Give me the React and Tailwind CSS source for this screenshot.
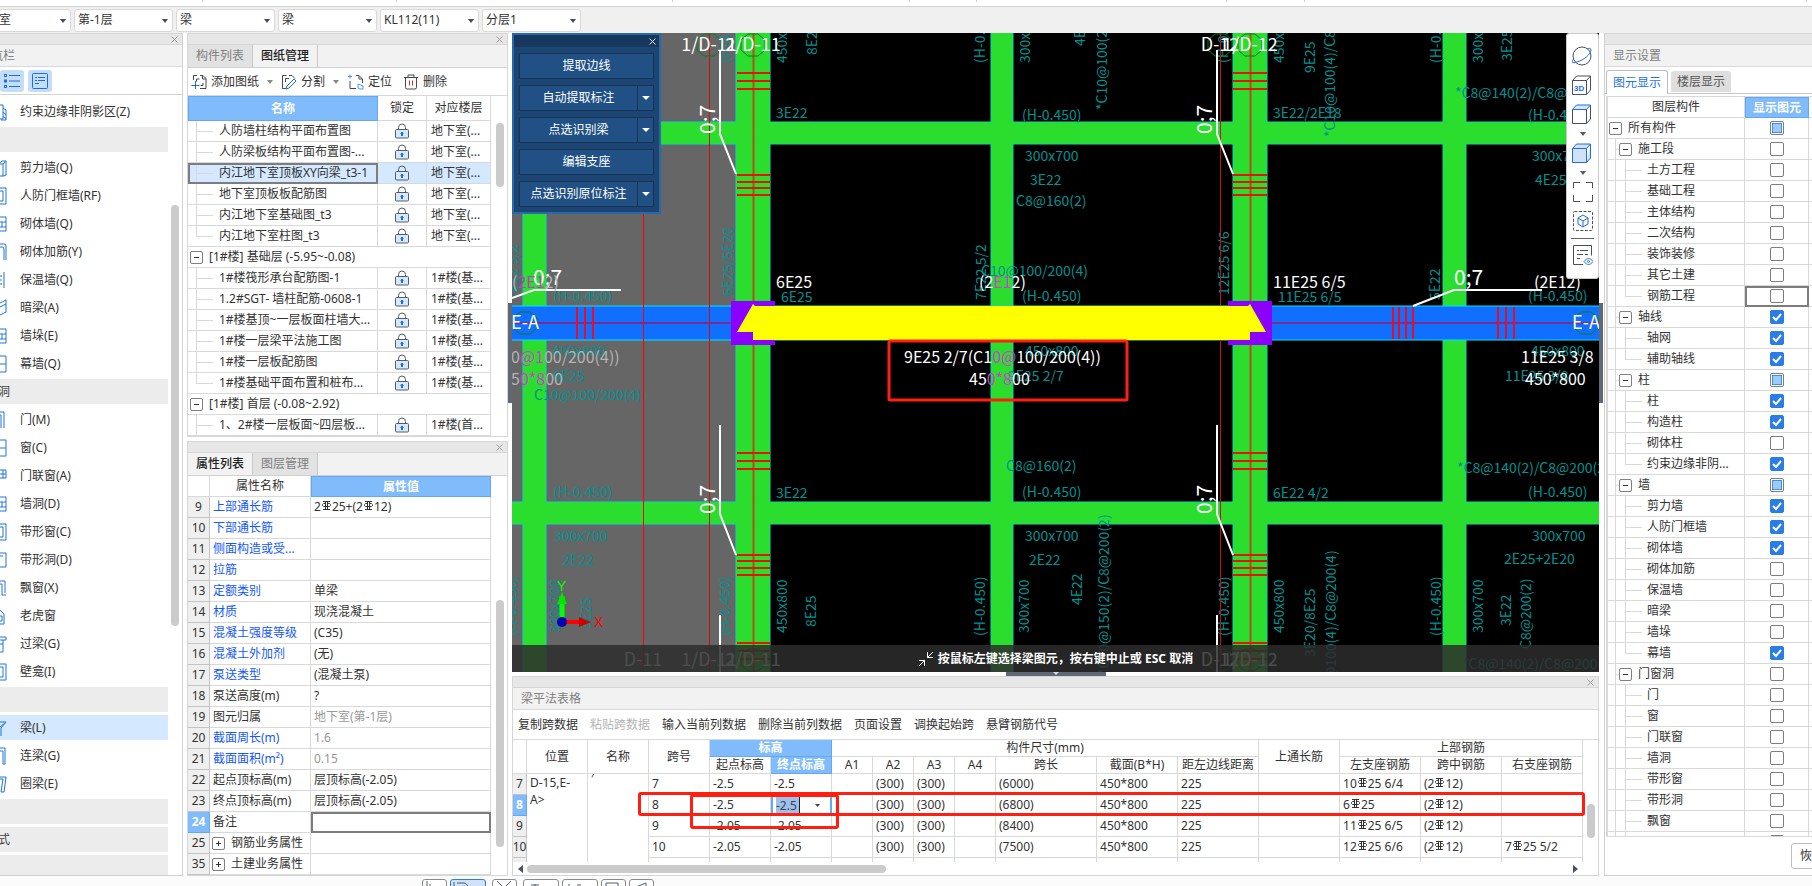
import React, { useState } from 'react';

const LEVEL_SELECTS = [
  { label: '楼栋', value: '地下室' },
  { label: '楼层', value: '第-1层' },
  { label: '构件大类', value: '梁' },
  { label: '构件类型', value: '梁' },
  { label: '构件', value: 'KL112(11)' },
  { label: '分层', value: '分层1' },
];

const RIBBON_GROUPS = ['w-[203px]', 'w-[194px]', 'w-[276px]', 'w-[237px]', 'w-[67px]', 'w-[250px]', 'w-[78px]', 'w-[502px]'];

const NAV_ITEMS = [
  { text: '约束边缘非阴影区(Z)', icon: 'hatch' },
  { text: '', group: true },
  { text: '剪力墙(Q)', icon: 'wall' },
  { text: '人防门框墙(RF)', icon: 'frame' },
  { text: '砌体墙(Q)', icon: 'brick' },
  { text: '砌体加筋(Y)', icon: 'hook' },
  { text: '保温墙(Q)', icon: 'dots' },
  { text: '暗梁(A)', icon: 'beam' },
  { text: '墙垛(E)', icon: 'brick' },
  { text: '幕墙(Q)', icon: 'pane' },
  { text: '洞', group: true },
  { text: '门(M)', icon: 'door' },
  { text: '窗(C)', icon: 'pane' },
  { text: '门联窗(A)', icon: 'grid' },
  { text: '墙洞(D)', icon: 'brick' },
  { text: '带形窗(C)', icon: 'frame' },
  { text: '带形洞(D)', icon: 'opening' },
  { text: '飘窗(X)', icon: 'bay' },
  { text: '老虎窗', icon: 'house' },
  { text: '过梁(G)', icon: 'lintel' },
  { text: '壁龛(I)', icon: 'frame' },
  { text: '', group: true },
  { text: '梁(L)', icon: 'fork', active: true },
  { text: '连梁(G)', icon: 'hook2' },
  { text: '圈梁(E)', icon: 'ring' },
  { text: '', group: true },
  { text: '式', group: true },
  { text: '', group: true },
];

const DRAWINGS = [
  { name: '人防墙柱结构平面布置图', floor: '地下室(...' },
  { name: '人防梁板结构平面布置图-...', floor: '地下室(...' },
  { name: '内江地下室顶板XY向梁_t3-1', floor: '地下室(...', active: true },
  { name: '地下室顶板板配筋图', floor: '地下室(...' },
  { name: '内江地下室基础图_t3', floor: '地下室(...' },
  { name: '内江地下室柱图_t3', floor: '地下室(...', last: true },
  { group: '[1#楼] 基础层 (-5.95~-0.08)' },
  { name: '1#楼筏形承台配筋图-1', floor: '1#楼(基...' },
  { name: '1.2#SGT- 墙柱配筋-0608-1', floor: '1#楼(基...' },
  { name: '1#楼基顶~一层板面柱墙大...', floor: '1#楼(基...' },
  { name: '1#楼一层梁平法施工图', floor: '1#楼(基...' },
  { name: '1#楼一层板配筋图', floor: '1#楼(基...' },
  { name: '1#楼基础平面布置和桩布...', floor: '1#楼(基...', last: true },
  { group: '[1#楼] 首层 (-0.08~2.92)' },
  { name: '1、2#楼一层板面~四层板...', floor: '1#楼(首...' },
];

const PROPERTIES = [
  { no: 9, name: '上部通长筋', value: '2Φ25+(2Φ12)', blue: true },
  { no: 10, name: '下部通长筋', value: '', blue: true },
  { no: 11, name: '侧面构造或受...', value: '', blue: true },
  { no: 12, name: '拉筋', value: '', blue: true },
  { no: 13, name: '定额类别', value: '单梁', blue: true },
  { no: 14, name: '材质', value: '现浇混凝土', blue: true },
  { no: 15, name: '混凝土强度等级', value: '(C35)', blue: true },
  { no: 16, name: '混凝土外加剂', value: '(无)', blue: true },
  { no: 17, name: '泵送类型', value: '(混凝土泵)', blue: true },
  { no: 18, name: '泵送高度(m)', value: '?' },
  { no: 19, name: '图元归属', value: '地下室(第-1层)', readonly: true },
  { no: 20, name: '截面周长(m)', value: '1.6', blue: true, readonly: true },
  { no: 21, name: '截面面积(m²)', value: '0.15', blue: true, readonly: true },
  { no: 22, name: '起点顶标高(m)', value: '层顶标高(-2.05)' },
  { no: 23, name: '终点顶标高(m)', value: '层顶标高(-2.05)' },
  { no: 24, name: '备注', value: '', active: true },
  { no: 25, name: '钢筋业务属性', value: '', expand: true },
  { no: 35, name: '土建业务属性', value: '', expand: true },
];

const SPANS = [
  { no: 7, start: '-2.5', end: '-2.5', len: '(6000)', left: '10Φ25 6/4', mid: '(2Φ12)', right: '' },
  { no: 8, start: '-2.5', end: '-2.5', len: '(6800)', left: '6Φ25', mid: '(2Φ12)', right: '', active: true },
  { no: 9, start: '-2.05', end: '-2.05', len: '(8400)', left: '11Φ25 6/5', mid: '(2Φ12)', right: '' },
  { no: 10, start: '-2.05', end: '-2.05', len: '(7500)', left: '12Φ25 6/6', mid: '(2Φ12)', right: '7Φ25 5/2' },
  { no: 11, start: '-2.05', end: '-2.05', len: '(7500)', left: '7Φ25 5/2', mid: '(2Φ12)', right: '7Φ25 5/2' },
];

const LAYERS = [
  { name: '所有构件', level: 0, state: 'some' },
  { name: '施工段', level: 1 },
  { name: '土方工程', level: 2 },
  { name: '基础工程', level: 2 },
  { name: '主体结构', level: 2 },
  { name: '二次结构', level: 2 },
  { name: '装饰装修', level: 2 },
  { name: '其它土建', level: 2 },
  { name: '钢筋工程', level: 2, last: true, active: true },
  { name: '轴线', level: 1, state: 'on' },
  { name: '轴网', level: 2, state: 'on' },
  { name: '辅助轴线', level: 2, state: 'on', last: true },
  { name: '柱', level: 1, state: 'some' },
  { name: '柱', level: 2, state: 'on' },
  { name: '构造柱', level: 2, state: 'on' },
  { name: '砌体柱', level: 2 },
  { name: '约束边缘非阴...', level: 2, state: 'on', last: true },
  { name: '墙', level: 1, state: 'some' },
  { name: '剪力墙', level: 2, state: 'on' },
  { name: '人防门框墙', level: 2, state: 'on' },
  { name: '砌体墙', level: 2, state: 'on' },
  { name: '砌体加筋', level: 2 },
  { name: '保温墙', level: 2 },
  { name: '暗梁', level: 2 },
  { name: '墙垛', level: 2 },
  { name: '幕墙', level: 2, state: 'on', last: true },
  { name: '门窗洞', level: 1 },
  { name: '门', level: 2 },
  { name: '窗', level: 2 },
  { name: '门联窗', level: 2 },
  { name: '墙洞', level: 2 },
  { name: '带形窗', level: 2 },
  { name: '带形洞', level: 2 },
  { name: '飘窗', level: 2 },
  { name: '', level: 2 },
];

const NAV_ICON_PATHS = {
  hatch: 'M0 2h3v14H0M3 5l3 2v10H1M3 9l3 3M3 13l3 3',
  wall: 'M0 4l2-2h4v14l-2 1H0M2 2v0M0 5h3v12M3 5l3-3',
  frame: 'M0 1h6v16H0M0 4h3v10H0',
  brick: 'M0 2h6v14H0M0 7h6M0 12h6M2 7v5',
  hook: 'M0 4h2a2 2 0 012 2v11M0 1h4a2 2 0 012 2v14',
  dots: 'M4 1v16M0 5h2M0 9h2M0 13h2',
  beam: 'M0 4l6-3v12l-6 3M0 8l6-3',
  pane: 'M0 1h6v16H0M0 9h6',
  door: 'M0 1h4v16M0 4h1v13',
  grid: 'M0 3h6v8H0M0 7h6M3 3v8',
  opening: 'M0 2h6v14H0M0 5h3',
  bay: 'M0 2h5v12M0 5h2v11h4',
  house: 'M0 3l4 4v10H0M0 9h2v5H0',
  lintel: 'M0 2h6v3H0M3 5v12H0M0 9h3',
  fork: 'M0 3h6l-5 6v8M0 8l5-4',
  hook2: 'M0 1h5v16H3V4H0',
  ring: 'M0 2h6l-2 15H1L3 4H0',
};

function NavIcon({ name }) {
  return (
    <svg width="7" height="18" viewBox="0 0 7 18" fill="none" stroke="#1f74d8" className="shrink-0">
      <path d={NAV_ICON_PATHS[name]} />
    </svg>
  );
}

// HRB400 bar mark, written between the bar count and the diameter
function BarMark() {
  return (
    <svg width="9" height="9" viewBox="0 0 9 9" fill="none" stroke="#333" className="mx-px inline-block align-[1px]" aria-label="三级钢">
      <path d="M1 .5h7M1 8.500h7M3.500 1v7M5.500 1v7" />
      <path d="M3.500 2.500h-2l-1 1v1l1 1h6l1-1v-1l-1-1h-2" />
    </svg>
  );
}

function BarText({ text }) {
  const parts = text.split('Φ');
  return parts.map((part, i) => (
    <React.Fragment key={i}>
      {i > 0 && <BarMark />}
      {part}
    </React.Fragment>
  ));
}

function Caret({ className = '' }) {
  return (
    <svg width="6" height="4" viewBox="0 0 6 4" className={className}>
      <path d="M0 0h6L3 4z" fill="currentColor" />
    </svg>
  );
}

function PanelStrip({ name }) {
  return (
    <div className="flex h-3 shrink-0 items-center justify-end border-y border-[#d6d6d6] bg-[#e7e7e7] pr-1">
      {name && (
        <button aria-label={name}>
          <svg width="7" height="7" viewBox="0 0 7 7" stroke="#9b9b9b" fill="none">
            <path d="M.5 .5l6 6M6.500 .5l-6 6" />
          </svg>
        </button>
      )}
    </div>
  );
}

function ToggleBox({ sign, label }) {
  return (
    <button aria-label={label} className="flex size-[13px] shrink-0 items-center justify-center rounded-[2px] border border-[#808080] bg-white">
      <svg width="7" height="7" viewBox="0 0 7 7" stroke="#333">
        <path d={sign === '+' ? 'M1 3.500h5M3.500 1v5' : 'M1 3.500h5'} />
      </svg>
    </button>
  );
}

function LockIcon() {
  return (
    <svg width="16" height="16" viewBox="0 0 16 16" fill="none" stroke="#555c66" className="mx-auto">
      <path d="M4.500 6V4.500a3.500 3.500 0 017 0V6" />
      <rect x="1.500" y="6.500" width="13" height="8.500" rx="1" fill="#d6e8fd" />
      <path d="M8 9v4" stroke="#1b6fe0" strokeWidth="2" />
      <path d="M6.500 10.500h3" stroke="#1b6fe0" />
    </svg>
  );
}

function TopBar() {
  return (
    <header className="shrink-0">
      <div className="flex h-[7px] items-start border-b border-[#d2d2d2] bg-white">
        {RIBBON_GROUPS.map((width) => (
          <div key={width} className={`h-0.5 shrink-0 border-r border-[#d6d6d6] ${width}`} />
        ))}
      </div>
      <div className="-ml-7 flex h-[26px] items-center gap-[3px] bg-[#f0f0f0]">
        {LEVEL_SELECTS.map((item) => (
          <div key={item.label} className="relative w-[99px]">
            <select
              aria-label={item.label}
              className={`block h-[23px] w-full appearance-none rounded-[3px] border border-[#d9d9d9] bg-white text-[#333] ${
                item.label === '楼栋' ? 'pl-[2px]' : 'pl-[3px]'
              }`}
            >
              <option>{item.value}</option>
            </select>
            <Caret className="pointer-events-none absolute right-[5px] top-[10px] text-[#444a66]" />
          </div>
        ))}
      </div>
    </header>
  );
}

function NavPanel() {
  return (
    <aside className="relative flex w-[183px] shrink-0 flex-col overflow-hidden border-b border-r border-[#d2d2d2] bg-white">
      <PanelStrip name="关闭导航栏" />
      <div className="flex h-[22px] shrink-0 items-center border-b border-[#d9d9d9] bg-[#f2f2f2] text-[#808080]">
        <span className="-ml-[21px]">导航栏</span>
      </div>
      <div className="flex h-7 shrink-0 items-center gap-1 border-b border-[#d2d2d2]">
        <button aria-label="列表" className="flex h-[22px] w-6 items-center justify-center rounded-[3px] bg-[#c4ddf8]">
          <svg width="16" height="14" viewBox="0 0 16 14" fill="none" stroke="#1b6fe0">
            <path d="M5 1.500h11M5 7h11M5 12.500h11" />
            <rect x=".5" y=".5" width="2" height="2" />
            <rect x=".5" y="6" width="2" height="2" />
            <rect x=".5" y="11.500" width="2" height="2" />
          </svg>
        </button>
        <button aria-label="分类" className="flex h-[22px] w-6 items-center justify-center rounded-[3px] bg-[#c4ddf8]">
          <svg width="16" height="16" viewBox="0 0 16 16" fill="none" stroke="#1b6fe0">
            <rect x=".5" y=".5" width="15" height="15" rx="1" />
            <path d="M3 4.500h2M6 4.500h7M3 7.500h2M6 7.500h7M3 10.500h4" />
          </svg>
        </button>
      </div>
      <nav className="flex w-[168px] flex-col gap-[3px] pt-1">
        {NAV_ITEMS.map((item, i) =>
          item.group ? (
            <div key={i} className="flex h-[25px] shrink-0 items-center bg-[#ececec] text-[#444]">
              <span className="-ml-0.5">{item.text}</span>
            </div>
          ) : (
            <a
              key={i}
              href="#"
              className={`flex h-[25px] shrink-0 items-center gap-[13px] text-[#333] ${item.active ? 'bg-[#d4e8ff]' : ''}`}
            >
              <NavIcon name={item.icon} />
              {item.text}
            </a>
          )
        )}
      </nav>
      <div className="absolute right-[3px] top-[172px] h-[421px] w-2 rounded bg-[#cbcbcb]" />
    </aside>
  );
}

function DrawingPanel() {
  return (
    <section className="relative h-[404px] shrink-0 overflow-hidden border-x border-b border-[#d6d6d6] bg-white">
      <PanelStrip name="关闭图纸管理" />
      <div className="flex h-[23px] border-b border-[#d0d0d0] bg-[#f2f2f2]">
        <button className="w-[65px] border-r border-[#c8c8c8] bg-[#e2e2e2] text-[#808080]">构件列表</button>
        <button className="w-[65px] border-r border-[#c8c8c8] font-medium text-[#222]">图纸管理</button>
      </div>
      <div className="flex h-7 items-center border-b border-[#d9d9d9] pl-[3px] text-[#333]">
        <button className="flex items-center gap-1">
          <svg width="16" height="16" viewBox="0 0 16 16" fill="none" stroke="#444a55">
            <path d="M2.500 6V1.500H6M9 1.500h3l3 3V14.500H9M11.500 2v3H15M5.500 7.500V5h3M12 9v2.500H9.500" />
            <path d="M4.500 7v8M.5 11.500h8" stroke="#1b6fe0" />
          </svg>
          添加图纸
        </button>
        <Caret className="ml-2 text-[#888]" />
        <button className="ml-2 flex items-center gap-1">
          <svg width="16" height="16" viewBox="0 0 16 16" fill="none" stroke="#444a55">
            <path d="M5 14.500H1.500V1.500h4M8 1.500h3l3 3M4.500 8V4.500H8" />
            <path d="M6 12l7-7 2 2-7 7-3 1z" stroke="#1b6fe0" />
          </svg>
          分割
        </button>
        <Caret className="ml-2 text-[#888]" />
        <button className="ml-[9px] flex items-center gap-1">
          <svg width="16" height="16" viewBox="0 0 16 16" fill="none" stroke="#444a55">
            <path d="M8 1.500h3l3.500 3.500V9M2 7v7.500h6M11 2v3h3" />
            <path d="M0 2.500h4M2 .5v4M10 10v4l2 1h3v-3z" stroke="#4b97ee" />
          </svg>
          定位
        </button>
        <button className="ml-3 flex items-center gap-[5px]">
          <svg width="14" height="16" viewBox="0 0 14 16" fill="none" stroke="#444a55">
            <path d="M0 3.500h14M4 3V1h6v2M1.500 4v9.500a1.500 1.500 0 001.500 1.500h8a1.500 1.500 0 001.500-1.500V4" />
            <path d="M5.500 6.500v5M8.500 6.500v5" stroke="#e02a2a" />
          </svg>
          删除
        </button>
      </div>
      <table className="w-[303px] table-fixed border-separate border-spacing-0 text-[#333]">
        <colgroup>
          <col />
          <col className="w-[49px]" />
          <col className="w-16" />
        </colgroup>
        <thead>
          <tr className="h-[25px]">
            <th className="border border-[#62a8f2] bg-[#80bbfb] font-bold text-white">名称</th>
            <th className="border-b border-r border-[#d9d9d9] font-normal">锁定</th>
            <th className="border-b border-r border-[#d9d9d9] font-normal">对应楼层</th>
          </tr>
        </thead>
        <tbody>
          {DRAWINGS.map((row) =>
            row.group ? (
              <tr key={row.group} className="h-[21px]">
                <td colSpan={3} className="border-b border-r border-[#d9d9d9] p-0">
                  <div className="flex h-5 items-center gap-[6px] pl-0.5">
                    <ToggleBox sign="-" label={`折叠 ${row.group}`} />
                    {row.group}
                  </div>
                </td>
              </tr>
            ) : (
              <tr key={row.name} className={`h-[21px] ${row.active ? 'bg-[#d4e8ff]' : ''}`}>
                <td
                  className={`border-b border-r border-[#d9d9d9] p-0 ${
                    row.active ? 'outline-2 -outline-offset-2 outline-[#7d7d7d]' : ''
                  }`}
                >
                  <div className="flex h-5 items-center pl-2">
                    <span className={`w-4 self-start border-l border-[#d9d9d9] ${row.last ? 'h-[11px]' : 'h-5'}`}>
                      <span className="mt-[10px] block h-px w-4 bg-[#d9d9d9]" />
                    </span>
                    <span className="ml-[7px] overflow-hidden whitespace-nowrap">{row.name}</span>
                  </div>
                </td>
                <td className="border-b border-r border-[#d9d9d9] p-0">
                  <LockIcon />
                </td>
                <td className="whitespace-nowrap border-b border-r border-[#d9d9d9] py-0 pl-1 pr-0">{row.floor}</td>
              </tr>
            )
          )}
        </tbody>
      </table>
      <div className="absolute right-[3px] top-[90px] h-16 w-2 rounded bg-[#cbcbcb]" />
    </section>
  );
}

function PropertyPanel() {
  return (
    <section className="relative min-h-0 flex-1 overflow-hidden border-x border-b border-[#d6d6d6] bg-white">
      <PanelStrip name="关闭属性列表" />
      <div className="flex h-[23px] border-b border-[#d0d0d0] bg-[#f2f2f2]">
        <button className="w-[65px] border-r border-[#c8c8c8] font-medium text-[#222]">属性列表</button>
        <button className="w-[65px] border-r border-[#c8c8c8] bg-[#e2e2e2] text-[#808080]">图层管理</button>
      </div>
      <table className="w-[303px] table-fixed border-separate border-spacing-0 text-[#333]">
        <colgroup>
          <col className="w-[22px]" />
          <col className="w-[101px]" />
          <col />
        </colgroup>
        <thead>
          <tr className="h-[21px]">
            <th className="border-b border-r border-[#d9d9d9] p-0" aria-label="序号" />
            <th className="border-b border-r border-[#d9d9d9] p-0 font-normal">属性名称</th>
            <th className="border border-[#62a8f2] bg-[#80bbfb] p-0 font-bold text-white">属性值</th>
          </tr>
        </thead>
        <tbody>
          {PROPERTIES.map((row) => (
            <tr key={row.no} className="h-[21px]">
              <td
                className={`border-b border-r p-0 text-center ${
                  row.active ? 'border-[#62a8f2] bg-[#80bbfb] font-bold text-white' : 'border-[#c4c4c4] bg-[#efefef]'
                }`}
              >
                {row.no}
              </td>
              <td className={`whitespace-nowrap border-b border-r border-[#d9d9d9] p-0 pl-[3px] ${row.blue ? 'text-[#1457ff]' : ''}`}>
                {row.expand ? (
                  <div className="-ml-px flex h-5 items-center gap-[6px]">
                    <ToggleBox sign="+" label={`展开 ${row.name}`} />
                    {row.name}
                  </div>
                ) : (
                  row.name
                )}
              </td>
              <td
                className={`border-b border-r border-[#d9d9d9] p-0 pl-[3px] ${row.readonly ? 'text-[#999]' : ''} ${
                  row.active ? 'outline-2 -outline-offset-2 outline-[#7d7d7d]' : ''
                }`}
              >
                <BarText text={row.value} />
              </td>
            </tr>
          ))}
        </tbody>
      </table>
      <div className="absolute right-[3px] top-[159px] h-[247px] w-2 rounded bg-[#cbcbcb]" />
    </section>
  );
}

const V_BEAMS = [
  { x: 523, w: 23 },
  { x: 736, w: 34 },
  { x: 991, w: 22 },
  { x: 1233, w: 34 },
  { x: 1443, w: 23 },
];
const H_BEAMS = [
  { y: 122, h: 22 },
  { y: 502, h: 22 },
];
const STIRRUP_Y = [73, 81, 89, 175, 182, 188, 195, 453, 461, 469, 555, 561, 568, 575, 643, 651, 659];
const STIRRUP_X = [577, 585, 593, 1393, 1399, 1406, 1413, 1498, 1506, 1514];

// plan notes: [text, x, baseline y]
const NOTES = [
  ['3E22', 776, 118], ['(H-0.450)', 1022, 120], ['300x700', 1025, 161], ['3E22', 1030, 185], ['C8@160(2)', 1016, 206],
  ['(H-0.450)', 553, 301], ['6E25', 781, 302], ['C10@100/200(4)', 981, 276], ['(H-0.450)', 1022, 301],
  ['3E22/2E18', 1273, 118], ['*C8@140(2)/C8@200(2)', 1455, 98], ['(H-0.450)', 1528, 120], ['300x700', 1532, 161],
  ['4E25', 1535, 185], ['11E25 6/5', 1278, 302], ['(H-0.450)', 1528, 301], ['450x800', 1531, 356], ['11E25 3/8', 1505, 381],
  ['450x800', 1025, 356], ['9E25 2/7', 1008, 381], ['450x800', 552, 356], ['6E25', 553, 381], ['C10@100/200(4)', 534, 400],
  ['(H-0.450)', 553, 497], ['300x700', 554, 541], ['2E22', 562, 565], ['3E22', 776, 498], ['C8@160(2)', 1006, 471],
  ['(H-0.450)', 1022, 497], ['300x700', 1025, 541], ['2E22', 1029, 565], ['6E22 4/2', 1273, 498],
  ['*C8@140(2)/C8@200(2)', 1457, 473], ['(H-0.450)', 1528, 497], ['300x700', 1532, 541], ['2E25+2E20', 1504, 564],
  ['*C8@140(2)/C8@200(2)', 1462, 669],
];

// notes that run upwards: [text, right edge x, bottom y]
const V_NOTES = [
  ['(H-0.450)', 730, 63], ['450x800', 787, 63], ['8E25', 817, 55], ['(H-0.450)', 985, 63], ['300x700', 1030, 63],
  ['4E22', 1085, 46], ['*C10@100(2)/C8@200(2)', 1107, 110], ['(H-0.450)', 1228, 63], ['450x800', 1284, 63],
  ['9E25', 1315, 73], ['*C10@100(4)/C8@200(4)', 1335, 137], ['(H-0.450)', 1441, 63], ['300x700', 1483, 63],
  ['3E25', 1512, 61], ['7E22 5/2', 518, 300], ['6E25/5E20', 733, 296], ['7E22 5/2', 986, 300], ['12E25 6/6', 1229, 295],
  ['5E22', 1440, 300], ['(H-0.450)', 517, 636], ['300x700', 560, 633], ['3E25', 591, 629], ['(H-0.450)', 730, 636],
  ['450x800', 787, 633], ['8E25', 816, 627], ['(H-0.450)', 985, 636], ['300x700', 1029, 633], ['4E22', 1082, 605],
  ['*C10@150(2)/C8@200(2)', 1109, 675], ['(H-0.450)', 1229, 636], ['450x800', 1284, 633], ['3E20/8E25', 1315, 657],
  ['*C10@100(4)/C8@200(4)', 1336, 711], ['(H-0.450)', 1441, 636], ['300x700', 1483, 633], ['3E22', 1511, 626],
  ['C8@200(2)', 1531, 649],
];

const AXIS_LABELS = [
  ['1/D-11', 709, 51], ['2/D-11', 753, 51], ['D-12', 1220, 51], ['1/D-12', 1250, 51],
  ['E-A', 525, 329], ['E-A', 1586, 329],
  ['D-11', 643, 666], ['1/D-11', 709, 666], ['2/D-11', 753, 666], ['D-12', 1220, 666], ['1/D-12', 1250, 666],
];

function AxisBubble({ x, y }) {
  return <path d={`M${x - 5} ${y - 11}h10l7 6v10l-7 6h-10l-7-6v-10z`} fill="none" stroke="#0b7a1f" />;
}

function PlanDrawing() {
  return (
    <svg viewBox="512 33 1087 639" preserveAspectRatio="xMinYMin slice" className="block h-full w-full bg-black">
      <rect x="512" y="33" width="224" height="639" fill="#666" />
      {V_BEAMS.map((b) => (
        <rect key={b.x} x={b.x} y="20" width={b.w} height="660" fill="#2bdd2d" stroke="#00dcdc" />
      ))}
      {H_BEAMS.map((b) => (
        <rect key={b.y} x="500" y={b.y} width="1110" height={b.h} fill="#2bdd2d" stroke="#00dcdc" />
      ))}
      {V_BEAMS.map((b) => (
        <rect key={b.x} x={b.x + 0.5} y="20" width={b.w - 1} height="660" fill="#2bdd2d" />
      ))}
      {H_BEAMS.map((b) => (
        <rect key={b.y} x="500" y={b.y + 0.5} width="1110" height={b.h - 1} fill="#2bdd2d" />
      ))}

      <g className="font-['Noto_Sans_CJK_SC',sans-serif] text-[14px]" fill="#009393">
        {NOTES.map(([text, x, y]) => (
          <text key={`${x}-${y}`} x={x} y={y}>
            {text}
          </text>
        ))}
        {V_NOTES.map(([text, x, y]) => (
          <text key={`${x}-${y}`} transform={`translate(${x} ${y}) rotate(-90)`}>
            {text}
          </text>
        ))}
      </g>

      <rect x="500" y="306" width="1110" height="34" fill="#116fff" stroke="#00e5ff" />
      <path d="M500 323h1110" stroke="#7a2d90" strokeWidth="2" />
      <path d="M643.500 33v639" stroke="#f00" />
      <path d="M709.500 33v639M1220.500 33v273M1220.500 340v332" stroke="#c81010" />
      <path d="M753.500 33v639M1250.500 33v639" stroke="#b0521c" strokeWidth="2" />
      {STIRRUP_Y.map((y) => (
        <path key={y} d={`M737 ${y}h33M1233 ${y}h34`} stroke="#e61405" strokeWidth="2" />
      ))}
      {STIRRUP_X.map((x) => (
        <path key={x} d={`M${x} 307v32`} stroke="#f00a1e" strokeWidth="2" />
      ))}
      <path d="M731 301h44v44h-44zM1228 301h44v44h-44z" fill="#8c00ff" />
      <path d="M753 304l2 2h493l2-2 16 28h-16v8H753v-8h-16z" fill="#ff0" />

      {[709, 753, 1220, 1250].map((x) => (
        <React.Fragment key={x}>
          <AxisBubble x={x} y={45} />
          <AxisBubble x={x} y={660} />
        </React.Fragment>
      ))}
      <AxisBubble x={643} y={660} />
      <AxisBubble x={525} y={323} />
      <AxisBubble x={1586} y={323} />

      <g fill="none" stroke="#fff" strokeWidth="2">
        <path d="M720 50v84l16 40M720 425v89l16 41M720 615v60" />
        <path d="M1217 50v84l16 40M1217 425v89l16 41M1217 615v60" />
        <path d="M512 298l22-8h87M1413 306l41-16h88" />
      </g>
      <g className="font-['Noto_Sans_CJK_SC',sans-serif]" fill="#fff">
        <g className="text-[18px]" textAnchor="middle">
          {AXIS_LABELS.map(([text, x, y]) => (
            <text key={`${x}-${y}`} x={x} y={y}>
              {text}
            </text>
          ))}
        </g>
        <g className="text-[21px]">
          <text x="533" y="285">0;7</text>
          <text x="1454" y="285">0;7</text>
          <text transform="translate(715 134) rotate(-90)">0;7</text>
          <text transform="translate(715 514) rotate(-90)">0;7</text>
          <text transform="translate(1212 134) rotate(-90)">0;7</text>
          <text transform="translate(1212 514) rotate(-90)">0;7</text>
        </g>
        <g className="text-[16px]">
          <text x="776" y="288">6E25</text>
          <text x="979" y="288">(2<tspan fill="#d63ad6">E1</tspan>2)</text>
          <text x="1273" y="288">11E25 6/5</text>
          <text x="1534" y="288">(2E12)</text>
          <text x="904" y="363">9E25 2/7(C1<tspan fill="#d63ad6">0@</tspan>100/200(4))</text>
          <text x="969" y="385">45<tspan fill="#d63ad6">0*8</tspan>00</text>
          <text x="1521" y="363">11E25 3/8</text>
          <text x="1525" y="385">450*800</text>
          <g fill="#b4b4b4">
            <text x="512" y="288">(<tspan fill="#b04ab0">2E1</tspan>2)</text>
            <text x="511" y="363">0<tspan fill="#d63ad6">@1</tspan>00/200(4))</text>
            <text x="511" y="385">5<tspan fill="#d63ad6">0*8</tspan>00</text>
          </g>
        </g>
      </g>

      <rect x="889" y="341" width="238" height="59" rx="1" fill="none" stroke="#ff1e0f" strokeWidth="3" />

      <path d="M562 620v-24" stroke="#0f0" strokeWidth="5" />
      <path d="M557 604l5-12 5 12z" fill="#00e600" />
      <path d="M562 622h22" stroke="#f00" strokeWidth="4" />
      <path d="M579 617l12 5-12 5z" fill="#d00000" />
      <circle cx="562" cy="622" r="5" fill="#0000b4" />
      <text x="557" y="591" fill="#0f0" className="font-['Liberation_Sans',sans-serif] text-[14px]">Y</text>
      <text x="594" y="627" fill="#f00" className="font-['Liberation_Sans',sans-serif] text-[14px]">X</text>
    </svg>
  );
}

const BEAM_TOOLS = [
  { text: '提取边线' },
  { text: '自动提取标注', menu: true },
  { text: '点选识别梁', menu: true },
  { text: '编辑支座' },
  { text: '点选识别原位标注', menu: true },
];

function BeamToolBox() {
  return (
    <div className="absolute left-0 top-0 w-[149px] border-2 border-[#2b68a8] bg-[#1d4574] pb-[5px] text-white">
      <div className="flex h-3 items-center justify-end bg-[#17375c] pr-[3px]">
        <button aria-label="关闭工具">
          <svg width="7" height="7" viewBox="0 0 7 7" stroke="#cfe4ff" fill="none">
            <path d="M.5 .5l6 6M6.500 .5l-6 6" />
          </svg>
        </button>
      </div>
      <div className="flex flex-col gap-[6px] px-[5px] pt-[6px]">
        {BEAM_TOOLS.map((tool) => (
          <div key={tool.text} className="flex h-[26px] border border-[#163356] bg-[#205084]">
            <button className="flex-1 whitespace-nowrap">{tool.text}</button>
            {tool.menu && (
              <button aria-label={`${tool.text} 更多`} className="flex w-4 items-center justify-center border-l border-[#163356]">
                <svg width="8" height="4" viewBox="0 0 8 4"><path d="M0 0h8L4 4z" fill="currentColor" /></svg>
              </button>
            )}
          </div>
        ))}
      </div>
    </div>
  );
}

function ViewToolBar() {
  const dark = '#4a505c';
  const blue = '#1b6fe0';
  return (
    <div className="absolute right-0 top-0 flex h-[246px] w-[33px] flex-col items-center rounded-[3px] border border-[#c9c9c9] bg-white pt-[11px] text-[#555b66]">
      <button aria-label="动态观察">
        <svg width="22" height="22" viewBox="0 0 22 22" fill="none" stroke={dark}>
          <circle cx="10" cy="11" r="9" />
          <path d="M2 13c-3 4-2 6 3 4 7-2 14-8 14-12 0-2-2-2-4-1" stroke={blue} />
        </svg>
      </button>
      <button aria-label="三维" className="mt-[7px]">
        <svg width="22" height="22" viewBox="0 0 22 22" fill="none" stroke={dark}>
          <path d="M.5 19V6.500h14v14H.5zM.5 6.500l4-4.500h14l-4 4.500M18.500 2v14l-4 4.500" />
          <text x="2" y="17" fill={blue} stroke="none" className="font-['Liberation_Sans',sans-serif] text-[8px] font-bold">3D</text>
        </svg>
      </button>
      <button aria-label="俯视" className="mt-[7px]">
        <svg width="22" height="22" viewBox="0 0 22 22" fill="none" stroke={dark}>
          <path d="M.5 6.500v14h14v-14M18.500 2v14l-4 4.500" />
          <path d="M.5 6.500l4-4.500h14l-4 4.500z" fill="#d6e8fd" stroke={blue} />
        </svg>
      </button>
      <Caret className="mt-[7px]" />
      <button aria-label="实体显示" className="mt-[6px]">
        <svg width="22" height="22" viewBox="0 0 22 22" fill="#cfe2fa" stroke={blue}>
          <path d="M.5 6.500h14v14H.5zM.5 6.500l4-4.500h14l-4 4.500M18.500 2v14l-4 4.500" />
        </svg>
      </button>
      <Caret className="mt-[7px]" />
      <button aria-label="全屏" className="mt-[7px]">
        <svg width="20" height="20" viewBox="0 0 20 20" fill="none" stroke={dark}>
          <path d="M.5 6V.5H7M13 .5h6.500V6M19.500 13v6.500H13M7 19.500H.5V13" />
        </svg>
      </button>
      <button aria-label="局部三维" className="mt-[9px]">
        <svg width="20" height="20" viewBox="0 0 20 20" fill="none" stroke={dark}>
          <rect x=".5" y=".5" width="19" height="19" rx="1" strokeDasharray="3 1.500" />
          <path d="M10 4l5 3v6l-5 3-5-3V7zM5 7l5 3 5-3M10 10v6" stroke={blue} />
        </svg>
      </button>
      <div className="mt-[7px] h-px w-[23px] bg-[#666]" />
      <button aria-label="显示设置" className="mt-[6px]">
        <svg width="20" height="20" viewBox="0 0 20 20" fill="none" stroke={dark}>
          <path d="M10 19.500H.5V.5h18v10M4 5.500h2M7 5.500h8M4 9.500h6M12 9.500h3M4 13.500h3" />
          <path d="M11 16.500c3-4 6-4 9 0-3 4-6 4-9 0z" stroke={blue} />
          <circle cx="15.500" cy="16.500" r="1" stroke={blue} />
        </svg>
      </button>
    </div>
  );
}

function Canvas() {
  return (
    <section className="relative min-h-0 flex-1 overflow-hidden">
      <PlanDrawing />
      <BeamToolBox />
      <ViewToolBar />
      <div className="absolute inset-x-0 bottom-0 flex h-[27px] items-center justify-center gap-1 bg-[#2d2d2d]/85 font-bold text-white">
        <svg width="16" height="16" viewBox="0 0 16 16" fill="none" stroke="#fff">
          <path d="M9.500 1v5.500H15M9.500 6.500L15 1M1 9.500h5.500V15M6.500 9.500L1 15" />
        </svg>
        按鼠标左键选择梁图元，按右键中止或 ESC 取消
      </div>
    </section>
  );
}

const SPAN_ACTIONS = ['复制跨数据', '粘贴跨数据', '输入当前列数据', '删除当前列数据', '页面设置', '调换起始跨', '悬臂钢筋代号'];
const HEAD = 'border-b border-r border-[#d9d9d9] p-0 font-normal';
const HEAD_ON = 'border-b border-r border-[#62a8f2] bg-[#80bbfb] p-0 font-bold text-white';
const CELL = 'whitespace-nowrap border-b border-r border-[#d9d9d9] p-0 pl-[3px]';

function SpanTable() {
  const [endLevel, setEndLevel] = useState('-2.5');

  return (
    <table className="w-[1070px] table-fixed border-separate border-spacing-0 text-[#333]">
      <colgroup>
        <col className="w-[14px]" />
        <col className="w-[61px]" />
        <col className="w-[61px]" />
        <col className="w-[61px]" />
        <col className="w-[61px]" />
        <col className="w-[61px]" />
        <col className="w-[41px]" />
        <col className="w-[41px]" />
        <col className="w-[41px]" />
        <col className="w-[41px]" />
        <col className="w-[101px]" />
        <col className="w-[81px]" />
        <col className="w-[81px]" />
        <col className="w-[81px]" />
        <col className="w-[81px]" />
        <col className="w-[81px]" />
        <col className="w-[81px]" />
      </colgroup>
      <thead className="leading-4">
        <tr className="h-[17px]">
          <th rowSpan={2} className={HEAD} aria-label="序号" />
          <th rowSpan={2} className={HEAD}>位置</th>
          <th rowSpan={2} className={HEAD}>名称</th>
          <th rowSpan={2} className={HEAD}>跨号</th>
          <th colSpan={2} className={HEAD_ON}>标高</th>
          <th colSpan={7} className={HEAD}>构件尺寸(mm)</th>
          <th rowSpan={2} className={HEAD}>上通长筋</th>
          <th colSpan={3} className={HEAD}>上部钢筋</th>
        </tr>
        <tr className="h-[17px]">
          <th className={HEAD}>起点标高</th>
          <th className={HEAD_ON}>终点标高</th>
          <th className={HEAD}>A1</th>
          <th className={HEAD}>A2</th>
          <th className={HEAD}>A3</th>
          <th className={HEAD}>A4</th>
          <th className={HEAD}>跨长</th>
          <th className={HEAD}>截面(B*H)</th>
          <th className={HEAD}>距左边线距离</th>
          <th className={HEAD}>左支座钢筋</th>
          <th className={HEAD}>跨中钢筋</th>
          <th className={HEAD}>右支座钢筋</th>
        </tr>
      </thead>
      <tbody>
        {SPANS.map((row, i) => (
          <tr key={row.no} className="h-[21px]">
            <td
              className={`border-b border-r p-0 text-center ${
                row.active ? 'border-[#62a8f2] bg-[#80bbfb] font-bold text-white' : 'border-[#c4c4c4] bg-[#efefef]'
              }`}
            >
              <span className="-mx-1">{row.no}</span>
            </td>
            {i === 0 && (
              <>
                <td rowSpan={5} className="border-r border-[#d9d9d9] p-0 pl-[3px] align-top leading-[17px]">
                  D-15,E-
                  <br />
                  A&gt;
                </td>
                <td rowSpan={5} className="border-r border-[#d9d9d9] p-0 pl-[3px] align-top leading-[10px]">
                  ′
                </td>
              </>
            )}
            <td className={CELL}>{row.no}</td>
            <td className={CELL}>{row.start}</td>
            {row.active ? (
              <td className="border-x-2 border-b border-[#62a8f2] p-0">
                <div className="flex h-5 items-center justify-between pl-[3px] pr-[10px] text-[#444]">
                  <input
                    aria-label="终点标高"
                    value={endLevel}
                    onChange={(e) => setEndLevel(e.target.value)}
                    className="h-[17px] w-6 border-r border-[#222] bg-[#9dc0ee]"
                  />
                  <button aria-label="选择标高">
                    <svg width="5" height="3" viewBox="0 0 5 3"><path d="M0 0h5L2.500 3z" fill="currentColor" /></svg>
                  </button>
                </div>
              </td>
            ) : (
              <td className={CELL}>{row.end}</td>
            )}
            <td className={CELL} />
            <td className={CELL}>(300)</td>
            <td className={CELL}>(300)</td>
            <td className={CELL} />
            <td className={CELL}>{row.len}</td>
            <td className={CELL}>450*800</td>
            <td className={CELL}>225</td>
            <td className={CELL} />
            <td className={CELL}><BarText text={row.left} /></td>
            <td className={CELL}><BarText text={row.mid} /></td>
            <td className={CELL}><BarText text={row.right} /></td>
          </tr>
        ))}
      </tbody>
    </table>
  );
}

function SpanPanel() {
  return (
    <section className="relative flex h-[200px] shrink-0 flex-col overflow-hidden border-x border-b border-[#d6d6d6] bg-white">
      <PanelStrip name="关闭梁平法表格" />
      <div className="flex h-[22px] shrink-0 items-center border-b border-[#d9d9d9] bg-[#f2f2f2] pl-2 text-[#808080]">梁平法表格</div>
      <div className="flex h-[29px] shrink-0 items-center gap-3 pl-[5px] text-[#333]">
        {SPAN_ACTIONS.map((text) => (
          <button key={text} disabled={text === '粘贴跨数据'} className="whitespace-nowrap disabled:text-[#b5b5b5]">
            {text}
          </button>
        ))}
      </div>
      <div className="h-[123px] shrink-0 overflow-hidden border-t border-[#d9d9d9]">
        <SpanTable />
      </div>
      <div className="flex flex-1 items-center pl-[5px] pr-5 text-[#4a4f66]">
        <svg width="5" height="8" viewBox="0 0 5 8"><path d="M5 0v8L0 4z" fill="currentColor" /></svg>
        <div className="ml-1 h-2 w-[359px] rounded bg-[#cbcbcb]" />
        <svg width="5" height="8" viewBox="0 0 5 8" className="ml-auto"><path d="M0 0v8l5-4z" fill="currentColor" /></svg>
      </div>
      <div className="absolute right-[3px] top-32 h-[34px] w-2 rounded bg-[#cbcbcb]" />
      <div className="pointer-events-none absolute left-[125px] right-[13px] top-[116px] h-6 rounded-[3px] border-3 border-[#ff1e0f]" />
      <div className="pointer-events-none absolute left-[177px] top-[118px] h-[35px] w-[149px] rounded-[3px] border-3 border-[#ff1e0f]" />
    </section>
  );
}

function LayerCheck({ name, state, onChange }) {
  return (
    <label className="relative mx-auto block size-[14px]">
      <input
        type="checkbox"
        aria-label={name}
        checked={state === 'on'}
        onChange={onChange}
        className="block size-[14px] appearance-none rounded-[2px] border border-[#7d7d7d] bg-white checked:border-[#2b7de6] checked:bg-[#2b7de6]"
      />
      {state === 'on' && (
        <svg width="14" height="14" viewBox="0 0 14 14" fill="none" stroke="#fff" strokeWidth="2" className="pointer-events-none absolute inset-0">
          <path d="M3 7l3 3 5-6" />
        </svg>
      )}
      {state === 'some' && <span className="pointer-events-none absolute inset-0.5 border border-[#3b8eea] bg-[#9dcbff]" />}
    </label>
  );
}

function LayerName({ row }) {
  if (row.level === 0) {
    return (
      <div className="flex h-5 items-center gap-[6px] pl-px">
        <ToggleBox sign="-" label={`折叠 ${row.name}`} />
        {row.name}
      </div>
    );
  }
  return (
    <div className="flex h-5 items-center pl-[7px]">
      <span className="h-5 border-l border-[#d9d9d9]" />
      {row.level === 1 ? (
        <>
          <span className="h-px w-[3px] bg-[#d9d9d9]" />
          <ToggleBox sign="-" label={`折叠 ${row.name}`} />
          <span className="ml-[6px]">{row.name}</span>
        </>
      ) : (
        <>
          <span className={`ml-[9px] w-4 self-start border-l border-[#d9d9d9] ${row.last ? 'h-[11px]' : 'h-5'}`}>
            <span className="mt-[10px] block h-px w-4 bg-[#d9d9d9]" />
          </span>
          <span className="ml-[6px] whitespace-nowrap">{row.name}</span>
        </>
      )}
    </div>
  );
}

function DisplayPanel() {
  const [layers, setLayers] = useState(LAYERS);

  const toggle = (index) => {
    setLayers(layers.map((row, i) => (i === index ? { ...row, state: row.state === 'on' ? '' : 'on' } : row)));
  };

  return (
    <aside className="flex w-[208px] shrink-0 flex-col overflow-hidden border-b border-l border-[#cfcfcf] bg-white text-[#333]">
      <PanelStrip />
      <div className="flex h-[22px] shrink-0 items-center border-b border-[#d9d9d9] bg-[#f2f2f2] pl-2 text-[#808080]">显示设置</div>
      <div className="flex h-[27px] shrink-0 items-end gap-[3px] border-b border-[#c8c8c8] pl-px">
        <button className="-mb-px h-6 w-[62px] rounded-t-[3px] border border-b-0 border-[#b9bec6] bg-white text-[#1b74e4]">图元显示</button>
        <button className="mb-px h-[21px] w-[60px] rounded-t-[3px] bg-[#dedede] text-[#555]">楼层显示</button>
      </div>
      <div className="ml-px mt-0.5 h-[741px] shrink overflow-hidden border-b border-l-2 border-t border-[#d9d9d9]">
        <table className="w-[260px] table-fixed border-separate border-spacing-0">
          <colgroup>
            <col className="w-[137px]" />
            <col className="w-16" />
            <col />
          </colgroup>
          <thead>
            <tr className="h-[21px]">
              <th className="border-b border-r border-[#d9d9d9] p-0 font-normal">图层构件</th>
              <th className="border border-[#62a8f2] bg-[#80bbfb] p-0 font-bold text-white">显示图元</th>
              <th className="border-b border-[#d9d9d9] p-0" aria-label="显示名称" />
            </tr>
          </thead>
          <tbody>
            {layers.map((row, i) => (
              <tr key={i} className="h-[21px]">
                <td className="border-b border-r border-[#d9d9d9] p-0">
                  <LayerName row={row} />
                </td>
                <td
                  className={`border-b border-r border-[#d9d9d9] p-0 ${row.active ? 'outline-2 -outline-offset-2 outline-[#7d7d7d]' : ''}`}
                >
                  <LayerCheck name={row.name} state={row.state} onChange={() => toggle(i)} />
                </td>
                <td className="border-b border-[#d9d9d9] p-0" />
              </tr>
            ))}
          </tbody>
        </table>
      </div>
      <div className="flex flex-1 items-start pl-[186px] pt-[6px]">
        <button className="h-[26px] w-[110px] shrink-0 rounded-[3px] border border-[#bdbdbd] bg-white pl-2 text-left">恢复默认设置</button>
      </div>
    </aside>
  );
}

const STATUS_TOOLS = [
  { name: '正交', width: 'w-[25px]', path: 'M4 1v6M6 5h2' },
  { name: '显示模式', width: 'w-9 ml-[3px]', path: 'M3 2v6M6 3h8l4 4', active: true },
  { name: '交点', width: 'w-[25px] ml-[6px]', path: 'M4 1l5 5M18 1l-5 5' },
  { name: '顶点', width: 'w-9 ml-[6px]', path: 'M7 5h8M11 4v3' },
  { name: '中点', width: 'w-9 ml-[3px]', path: 'M6 4v3M14 5h4' },
  { name: '选择', width: 'w-[25px] ml-[3px]', path: 'M4 3h12v5M4 3v5' },
  { name: '绘制', width: 'w-[25px] ml-[3px]', path: 'M6 7l10-4v5' },
];

function StatusBar() {
  return (
    <footer className="flex h-[10px] shrink-0 items-start overflow-hidden bg-[#fbfbfb] pl-[422px] pt-[3px]">
      {STATUS_TOOLS.map((tool) => (
        <button
          key={tool.name}
          aria-label={tool.name}
          className={`h-5 shrink-0 overflow-hidden rounded-[3px] border ${tool.width} ${
            tool.active ? 'border-[#2b7de6] bg-[#cfe2fa]' : 'border-[#8b8b8b] bg-white'
          }`}
        >
          <svg width="22" height="20" viewBox="0 0 22 20" fill="none" stroke="#555c70">
            <path d={tool.path} />
          </svg>
        </button>
      ))}
    </footer>
  );
}

function App() {
  return (
    <div className="flex h-screen flex-col overflow-hidden bg-white font-['Noto_Sans','Noto_Sans_CJK_SC',sans-serif] text-xs">
      <TopBar />
      <main className="flex min-h-0 flex-1">
        <NavPanel />
        <div className="ml-1 flex w-[321px] shrink-0 flex-col gap-1">
          <DrawingPanel />
          <PropertyPanel />
        </div>
        <div className="flex w-1 shrink-0 items-start pt-[270px]">
          <div className="h-[100px] w-1 bg-[#5f6875]" />
        </div>
        <div className="flex min-w-0 flex-1 flex-col">
          <Canvas />
          <div className="flex h-1 shrink-0 justify-center">
            <div className="flex w-[100px] items-start justify-center bg-[#5f6875] text-[#d5dae0]">
              <svg width="6" height="3" viewBox="0 0 6 3"><path d="M0 0h6L3 3z" fill="currentColor" /></svg>
            </div>
          </div>
          <SpanPanel />
        </div>
        <div className="flex w-[5px] shrink-0 items-start pt-[270px]">
          <div className="h-[100px] w-1 bg-[#5f6875]" />
        </div>
        <DisplayPanel />
      </main>
      <StatusBar />
    </div>
  );
}

export default App;
